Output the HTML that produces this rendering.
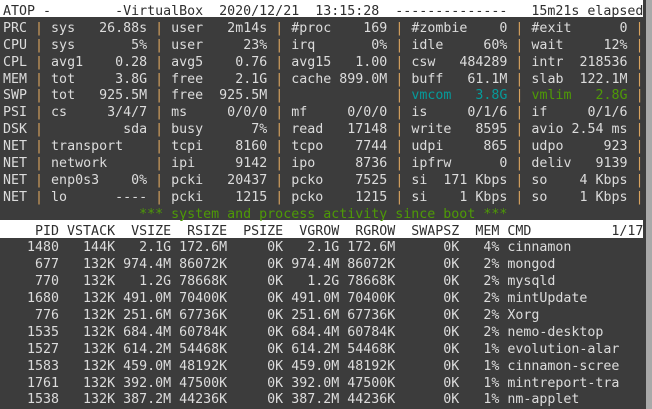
<!DOCTYPE html>
<html><head><meta charset="utf-8"><style>
html,body{margin:0;padding:0;}
body{width:652px;height:409px;background:#3c3c3c;overflow:hidden;position:relative;}
.band{position:absolute;left:0;width:643px;background:#fff;}
#t{position:absolute;left:3px;top:4px;margin:0;font-family:"DejaVu Sans Mono","Liberation Mono",monospace;font-size:13.3px;line-height:16.9px;color:#dcdcdc;white-space:pre;}
#t div{height:16.9px;}
.o{color:#d9a35e;}
.g{color:#4e9a06;}
.c{color:#069a9a;}
.w{color:#2e2e2e;}
#sb{position:absolute;left:646px;top:0;width:6px;height:409px;background:#a9a9a9;}
</style></head><body>
<div class="band" style="top:0;height:17px"></div>
<div class="band" style="top:220px;height:18px"></div>
<pre id="t"><div class="w">ATOP -        -VirtualBox  2020/12/21  13:15:28  --------------   15m21s elapsed</div><div>PRC <span class="o">|</span> sys   26.88s <span class="o">|</span> user   2m14s <span class="o">|</span> #proc    169 <span class="o">|</span> #zombie    0 <span class="o">|</span> #exit      0 <span class="o">|</span></div><div>CPU <span class="o">|</span> sys       5% <span class="o">|</span> user     23% <span class="o">|</span> irq       0% <span class="o">|</span> idle     60% <span class="o">|</span> wait     12% <span class="o">|</span></div><div>CPL <span class="o">|</span> avg1    0.28 <span class="o">|</span> avg5    0.76 <span class="o">|</span> avg15   1.00 <span class="o">|</span> csw   484289 <span class="o">|</span> intr  218536 <span class="o">|</span></div><div>MEM <span class="o">|</span> tot     3.8G <span class="o">|</span> free    2.1G <span class="o">|</span> cache 899.0M <span class="o">|</span> buff   61.1M <span class="o">|</span> slab  122.1M <span class="o">|</span></div><div>SWP <span class="o">|</span> tot   925.5M <span class="o">|</span> free  925.5M <span class="o">|</span>              <span class="o">|</span> <span class="c">vmcom   3.8G</span> <span class="o">|</span> <span class="g">vmlim   2.8G</span> <span class="o">|</span></div><div>PSI <span class="o">|</span> cs     3/4/7 <span class="o">|</span> ms     0/0/0 <span class="o">|</span> mf     0/0/0 <span class="o">|</span> is     0/1/6 <span class="o">|</span> if     0/1/6 <span class="o">|</span></div><div>DSK <span class="o">|</span>          sda <span class="o">|</span> busy      7% <span class="o">|</span> read   17148 <span class="o">|</span> write   8595 <span class="o">|</span> avio 2.54 ms <span class="o">|</span></div><div>NET <span class="o">|</span> transport    <span class="o">|</span> tcpi    8160 <span class="o">|</span> tcpo    7744 <span class="o">|</span> udpi     865 <span class="o">|</span> udpo     923 <span class="o">|</span></div><div>NET <span class="o">|</span> network      <span class="o">|</span> ipi     9142 <span class="o">|</span> ipo     8736 <span class="o">|</span> ipfrw      0 <span class="o">|</span> deliv   9139 <span class="o">|</span></div><div>NET <span class="o">|</span> enp0s3    0% <span class="o">|</span> pcki   20437 <span class="o">|</span> pcko    7525 <span class="o">|</span> si  171 Kbps <span class="o">|</span> so    4 Kbps <span class="o">|</span></div><div>NET <span class="o">|</span> lo      ---- <span class="o">|</span> pcki    1215 <span class="o">|</span> pcko    1215 <span class="o">|</span> si    1 Kbps <span class="o">|</span> so    1 Kbps <span class="o">|</span></div><div class="g">                 *** system and process activity since boot ***</div><div class="w">    PID VSTACK  VSIZE  RSIZE  PSIZE  VGROW  RGROW  SWAPSZ  MEM CMD          1/17</div><div>   1480   144K   2.1G 172.6M     0K   2.1G 172.6M      0K   4% cinnamon</div><div>    677   132K 974.4M 86072K     0K 974.4M 86072K      0K   2% mongod</div><div>    770   132K   1.2G 78668K     0K   1.2G 78668K      0K   2% mysqld</div><div>   1680   132K 491.0M 70400K     0K 491.0M 70400K      0K   2% mintUpdate</div><div>    776   132K 251.6M 67736K     0K 251.6M 67736K      0K   2% Xorg</div><div>   1535   132K 684.4M 60784K     0K 684.4M 60784K      0K   2% nemo-desktop</div><div>   1527   132K 614.2M 54468K     0K 614.2M 54468K      0K   1% evolution-alar</div><div>   1583   132K 459.0M 48192K     0K 459.0M 48192K      0K   1% cinnamon-scree</div><div>   1761   132K 392.0M 47500K     0K 392.0M 47500K      0K   1% mintreport-tra</div><div>   1538   132K 387.2M 44236K     0K 387.2M 44236K      0K   1% nm-applet</div></pre>
<div id="sb"></div>
</body></html>
